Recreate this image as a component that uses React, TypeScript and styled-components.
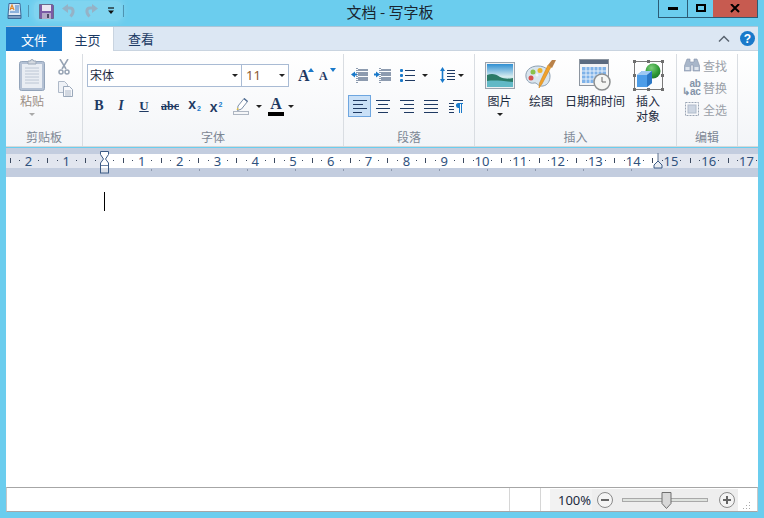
import React from "react";
import styled, { createGlobalStyle } from "styled-components";

const Global = createGlobalStyle`
  html, body { margin: 0; padding: 0; background: #6bcdee; }
  * { box-sizing: border-box; }
  body { font-family: "Noto Sans CJK SC", "Noto Sans", sans-serif; }
`;

const Window = styled.div`
  width: 764px; height: 518px; background: #6bcdee; display: flex; flex-direction: column;
  padding: 0 6px 6px; overflow: hidden; font-size: 12px; color: #1d2b3f;
`;
const TitleBar = styled.div`height: 26px; display: flex; align-items: flex-start; flex: none;`;
const Quick = styled.div`width: 118px; height: 24px; display: flex; align-items: center; margin-top: -1px; flex: none;`;
const AppIconSlot = styled.div`width: 16px; flex: none; display: flex; justify-content: center;`;
const QuickSep = styled.div`width: 1px; height: 12px; background: #4f93b0; margin: 0 5px 0 6px; flex: none;`;
const QuickGlow = styled.div`
  display: flex; align-items: center; height: 20px; width: 88px; flex: none; margin-right: -5px;
  background: rgba(255,255,255,.14); box-shadow: 0 0 6px 2px rgba(255,255,255,.14); border-radius: 6px;
`;
const QuickBtn = styled.div<{ $w: number }>`width: ${p => p.$w}px; flex: none; display: flex; justify-content: center; align-items: center;`;
const Title = styled.div`flex: 1; text-align: center; font-size: 15px; line-height: 24px; color: #1a2530; padding-right: 2px;`;
const WinButtons = styled.div`display: flex; height: 18px; border: 1px solid #2b5c76; border-top: 0; flex: none;`;
const WinBtn = styled.div<{ $w: number; $close?: boolean }>`
  width: ${p => p.$w}px; display: flex; align-items: center; justify-content: center;
  background: ${p => (p.$close ? "#c75b50" : "transparent")};
  border-left: ${p => (p.$close ? "0" : "1px solid #2b5c76")};
  &:first-child { border-left: 0; }
`;

const Tabs = styled.div`height: 25px; background: #dce7f3; display: flex; align-items: stretch; border-top: 1px solid #a9c6d9; border-bottom: 1px solid #c9d4e0; flex: none;`;
const FileTab = styled.div`width: 56px; background: #1979ca; color: #fff; font-size: 13px; line-height: 21px; display: flex; align-items: center; justify-content: center; margin-bottom: -1px;`;
const Tab = styled.div<{ $active?: boolean }>`
  width: ${p => (p.$active ? 52 : 54)}px; display: flex; align-items: center; justify-content: center; font-size: 13px; line-height: 21px; color: #1b3a63;
  background: ${p => (p.$active ? "#fff" : "transparent")};
  border-right: ${p => (p.$active ? "1px solid #c9d4e0" : "0")};
  margin-bottom: ${p => (p.$active ? "-1px" : "0")};
`;
const TabSpacer = styled.div`flex: 1;`;
const TabTools = styled.div`display: flex; align-items: center; gap: 10px; padding-right: 3px;`;

const Ribbon = styled.div`
  height: 96px; display: flex; background: linear-gradient(#ffffff, #f3f5f8); border-bottom: 1px solid #d8d8d8; padding-top: 3px; flex: none;
`;
const Group = styled.div<{ $w: number }>`
  width: ${p => p.$w}px; height: 92px; display: flex; flex-direction: column; border-right: 1px solid #d9dde2; flex: none;
`;
const GroupBody = styled.div`flex: 1; display: flex; min-height: 0;`;
const GroupLabel = styled.div`height: 18px; text-align: center; color: #7d8794; font-size: 12px; line-height: 18px;`;

const BigButton = styled.div<{ $w: number; $dim?: boolean }>`
  width: ${p => p.$w}px; flex: none; display: flex; flex-direction: column; align-items: center; padding-top: 5px;
  color: ${p => (p.$dim ? "#9b8f86" : "#1d2b3f")};
`;
const BigIcon = styled.div`height: 32px; display: flex; align-items: center; justify-content: center;`;
const BigText = styled.div`font-size: 12px; line-height: 18px; margin-top: 1px; text-align: center; white-space: nowrap;`;
const BigLine = styled.div`font-size: 12px; line-height: 18px; height: 15px; text-align: center; white-space: nowrap;`;
const BigLines = styled.div`margin-top: 1px; display: flex; flex-direction: column;`;
const DropArrow = styled.div<{ $dim?: boolean; $mt?: number }>`
  width: 0; height: 0; border: 3px solid transparent; border-bottom: 0; border-top: 3px solid ${p => (p.$dim ? "#a9a9a9" : "#222")};
  margin-top: ${p => p.$mt ?? 0}px;
`;
const Stack = styled.div<{ $pt: number }>`display: flex; flex-direction: column; padding-top: ${p => p.$pt}px;`;
const Row = styled.div<{ $h?: number; $mt?: number; $ml?: number }>`
  display: flex; align-items: center; height: ${p => (p.$h ? `${p.$h}px` : "auto")};
  margin-top: ${p => p.$mt ?? 0}px; margin-left: ${p => p.$ml ?? 0}px;
`;
const Cell = styled.div<{ $w: number }>`width: ${p => p.$w}px; flex: none; display: flex; justify-content: center; align-items: center; color: #1f3a63;`;
const FontBox = styled.div<{ $w: number }>`
  width: ${p => p.$w}px; height: 23px; border: 1px solid #a9bbd4; background: #fff; display: flex; align-items: center; justify-content: space-between;
  padding: 0 3px 1px 2px; font-size: 12px; line-height: 18px; color: #1d2b3f; flex: none;
  & + & { border-left: 0; }
`;
const SizeText = styled.span`font-family: "Noto Sans", sans-serif; font-size: 13px; color: #8a5a30; padding-left: 2px;`;
const Serif = styled.span<{ $i?: boolean; $size?: number; $strike?: boolean }>`
  font-family: "Liberation Serif", serif; font-weight: 700; font-size: ${p => p.$size ?? 14}px; line-height: 16px;
  font-style: ${p => (p.$i ? "italic" : "normal")}; text-decoration: ${p => (p.$strike ? "line-through" : "none")}; color: #1f3a63;
`;
const Under = styled(Serif)`text-decoration: underline;`;
const Script = styled.span`font-family: "Liberation Sans", sans-serif; font-weight: 700; font-size: 14px; line-height: 16px; color: #1f3a63;`;
const Sub = styled.span`font-size: 7px; color: #1979ca; vertical-align: -2px; margin-left: 1px;`;
const Sup = styled.span`font-size: 7px; color: #1979ca; vertical-align: 5px; margin-left: 1px;`;
const ColorA = styled.div`display: flex; flex-direction: column; align-items: center; width: 16px;`;
const ColorBar = styled.div`width: 16px; height: 4px; background: #000;`;
const GrowA = styled.div`position: relative; width: 18px; height: 16px; display: flex; align-items: flex-end;`;
const Caretlet = styled.div<{ $down?: boolean }>`
  position: absolute; top: 0; right: ${p => (p.$down ? 1 : 2)}px; width: 0; height: 0; border: 3px solid transparent;
  ${p => (p.$down ? "border-bottom: 0; border-top: 4px solid #1979ca;" : "border-top: 0; border-bottom: 4px solid #1979ca;")}
`;
const SelectedCell = styled(Cell)`height: 22px; background: #c9e0f7; border: 1px solid #6ea6e0;`;

const EditRow = styled.div`height: 22px; display: flex; align-items: center; gap: 3px; color: #9aa0a8; font-size: 12px; padding-left: 6px;`;
const EditIcon = styled.div`width: 17px; display: flex; justify-content: center;`;

const RulerWrap = styled.div`position: relative; flex: none;`;
const Ruler = styled.div`height: 29px; margin-top: 1px; background: #c3cddf; padding-top: 6px; overflow: hidden;`;
const RulerBand = styled.div`
  height: 14px;
  background: linear-gradient(to right, #e2e6ef 98px, #fff 98px, #fff 652px, #e2e6ef 652px);
`;
const RulerTrack = styled.div`display: flex; margin-left: -15.4px;`;
const RulerUnit = styled.div`position: relative; flex: none; width: 37.8px; height: 14px;`;
const RulerNum = styled.span`
  position: absolute; left: -10px; width: 20px; text-align: center; top: -2px; font-family: "Noto Sans", sans-serif; font-size: 13px; line-height: 18px; color: #30527e;
`;
const RulerTick = styled.i<{ $at: number; $long?: boolean }>`
  position: absolute; left: ${p => p.$at}%; top: ${p => (p.$long ? 4 : 6)}px; width: 1px; height: ${p => (p.$long ? 5 : 1)}px; background: #3c4a60;
`;
const TabStops = styled.div`
  height: 9px; width: 530px; margin-left: 98px;
  background: repeating-linear-gradient(to right, transparent 0, transparent 47px, #8f9aae 47px, #8f9aae 48px) no-repeat 0 1px / 100% 2px;
`;
const IndentMarker = styled.svg<{ $x: number; $y: number }>`position: absolute; left: ${p => p.$x}px; top: ${p => p.$y}px;`;

const Editor = styled.div`flex: 1; background: #fff; padding: 15px 0 0 98px; min-height: 0;`;
const Caret = styled.div`width: 1px; height: 19px; background: #000;`;

const Status = styled.div`
  height: 25px; background: #fff; border-top: 1px solid #a6a6a6; border-bottom: 1px solid #a6a6a6; display: flex; flex: none;
  border-left: 1px solid #c8c8c8; border-right: 1px solid #c8c8c8;
`;
const StatusCell = styled.div<{ $w: number }>`width: ${p => p.$w}px; border-right: 1px solid #d6d6d6; flex: none;`;
const ZoomArea = styled.div`flex: 1; display: flex; align-items: center; padding-left: 9px;`;
const ZoomValue = styled.div`width: 42px; height: 22px; background: #f2f2f2; font-family: "Noto Sans", sans-serif; font-size: 13px; line-height: 22px; color: #1d2b3f; padding-left: 8px; white-space: nowrap; flex: none;`;
const ZoomControls = styled.div`width: 146px; height: 22px; background: #eeeeee; display: flex; align-items: center; padding-left: 5px; flex: none;`;
const Track = styled.div`position: relative; width: 86px; height: 4px; margin: 0 11px 0 9px; background: #dfe3df; border: 1px solid #a9a9a9; flex: none;`;
const Thumb = styled.svg`position: absolute; left: 38px; top: -7px;`;
const Grip = styled.svg`margin-left: 5px; align-self: flex-end; margin-bottom: 1px;`;

const AppIcon = () => (
  <svg width="15" height="16" viewBox="0 0 15 16">
    <path d="M2 .5h11l1 12H1z" fill="#dfe9f5" stroke="#3f6a99" />
    <path d="M1 12.500h13v3H1z" fill="#7f9cc0" stroke="#3f6a99" />
    <path d="M3 7l2-5 2 5M4 5.500h2" fill="none" stroke="#e4892b" strokeWidth="1.200" />
    <path d="M8 3h4M8 5h4M8 7h4M3 9h9" stroke="#3a7bc4" />
  </svg>
);
const SaveIcon = () => (
  <svg width="15" height="15" viewBox="0 0 15 15">
    <path d="M.5.500h13l1 1v13H.5z" fill="#7b5aa6" stroke="#6a6a8c" />
    <rect x="3" y="1" width="9" height="6" fill="#e9e6f2" />
    <rect x="3" y="9" width="9" height="6" fill="#b3a9c7" />
    <rect x="8" y="10" width="2" height="4" fill="#4f4a66" />
  </svg>
);
const UndoIcon = ({ flip }: { flip?: boolean }) => (
  <svg width="14" height="14" viewBox="0 0 14 14" style={flip ? { transform: "scaleX(-1)" } : undefined}>
    <path d="M3 4h5c3.500 0 4.500 4.500 .5 8.500" fill="none" stroke="#95b2c6" strokeWidth="3" />
    <path d="M6 0v9L0 4.500z" fill="#95b2c6" />
  </svg>
);
const CustomizeIcon = () => (
  <svg width="8" height="8" viewBox="0 0 8 8"><path d="M1 1h6" stroke="#111" strokeWidth="1.200" /><path d="M1 3.500h6L4 7z" fill="#111" /></svg>
);
const ClipboardIcon = () => (
  <svg width="26" height="32" viewBox="0 0 26 32">
    <rect x=".5" y="2.500" width="25" height="29" rx="2" fill="#b4c1d4" stroke="#93a4ba" />
    <rect x="3" y="5" width="20" height="24" fill="#e9edf3" />
    <path d="M6 9h14M6 12h14M6 15h14M6 18h14M6 21h14M6 24h14" stroke="#bcc6d4" />
    <path d="M9 5V2h2.500a1.500 1.500 0 0 1 3 0H17v3z" fill="#d4d9e0" stroke="#9aa7b8" />
  </svg>
);
const CutIcon = () => (
  <svg width="12" height="16" viewBox="0 0 12 16" fill="none" stroke="#96a3b4" strokeWidth="1.500">
    <path d="M2 0l6 10M10 0L4 10" /><circle cx="3" cy="13" r="2" /><circle cx="9" cy="13" r="2" />
  </svg>
);
const CopyIcon = () => (
  <svg width="16" height="16" viewBox="0 0 16 16">
    <path d="M.5.500h6l3 3v8H.5z" fill="#eef1f6" stroke="#aeb9c8" />
    <path d="M5.500 5.500h6l3 3v7h-9z" fill="#f7f8fb" stroke="#9aa8ba" />
    <path d="M7 10h6M7 12h6M7 14h6" stroke="#aeb9c8" />
  </svg>
);
const Highlighter = () => (
  <svg width="17" height="19" viewBox="0 0 17 19">
    <path d="M5 9l6-7.500 3.500 3-6 7.500-4 1.500z" fill="#fff" stroke="#7b8ea8" />
    <path d="M11 1.500l3.500 3" stroke="#4e6c92" strokeWidth="1.500" />
    <path d="M4.500 10.500l-1 2.500 2.500-.500z" fill="#e8c33c" />
    <rect x=".5" y="14.500" width="15" height="3" fill="#f5f6f8" stroke="#aeb6c2" />
  </svg>
);
const Lines = ({ rows, w = 14 }: { rows: [number, number][]; w?: number }) => (
  <svg width={w} height="13" viewBox={`0 0 ${w} 13`}>
    {rows.map(([x, len], i) => (
      <rect key={i} x={x} y={i * (12 / Math.max(rows.length - 1, 1))} width={len} height="1" fill="#1f3a63" />
    ))}
  </svg>
);
const IndentIcon = ({ rev }: { rev?: boolean }) => (
  <svg width="17" height="15" viewBox="0 0 17 15">
    <path d="M7 2h10M7 5h10M7 7h10M7 10h10M7 12h10" stroke="#1f3a63" />
    <path d="M6 0v15" stroke="#1f3a63" strokeDasharray="1 1" />
    {rev ? <path d="M0 6.500l4-3v2h2v2H4v2z" fill="#1979ca" /> : <path d="M6 6.500l-4-3v2H0v2h2v2z" fill="#1979ca" />}
  </svg>
);
const BulletsIcon = () => (
  <svg width="15" height="13" viewBox="0 0 15 13">
    <path d="M5 1.500h10M5 6.500h10M5 11.500h10" stroke="#1f3a63" />
    <rect y="0" width="3" height="3" rx="1" fill="#1979ca" /><rect y="5" width="3" height="3" rx="1" fill="#1979ca" /><rect y="10" width="3" height="3" rx="1" fill="#1979ca" />
  </svg>
);
const SpacingIcon = () => (
  <svg width="15" height="16" viewBox="0 0 15 16">
    <path d="M7 3.500h8M7 6.500h8M7 9.500h8M7 12.500h8" stroke="#1f3a63" />
    <path d="M2.500 0L5 4H3.300v8H5l-2.500 4L0 12h1.700V4H0z" fill="#1979ca" />
  </svg>
);
const RtlIcon = () => (
  <svg width="14" height="13" viewBox="0 0 14 13">
    <path d="M4 .5h10M0 3.500h5M0 6.500h5M0 9.500h5M0 12.500h5" stroke="#1f3a63" />
    <path d="M9 3h5v1h-1v9h-1V4h-1v9h-1V8a2.500 2.500 0 0 1-1-5z" fill="#1979ca" />
  </svg>
);
const PictureIcon = () => (
  <svg width="30" height="27" viewBox="0 0 30 27">
    <rect x=".5" y=".5" width="29" height="26" fill="#eef0f2" stroke="#9aa3ad" />
    <defs><linearGradient id="sky" x1="0" y1="0" x2="0" y2="1"><stop offset="0" stopColor="#2f8fd2" /><stop offset=".55" stopColor="#d6ecef" /><stop offset="1" stopColor="#5cb2b8" /></linearGradient></defs>
    <rect x="2" y="2" width="26" height="23" fill="url(#sky)" />
    <path d="M2 13c5-2 9-1 13 2 4 2 9 2 13 1v4H2z" fill="#2a7a66" />
    <path d="M2 19c8-1 16 0 26 1v5H2z" fill="#62b9c6" />
  </svg>
);
const PaletteIcon = () => (
  <svg width="32" height="32" viewBox="0 0 32 32">
    <path d="M13 7C5 7 0 12 1 18c.5 4 4 7 8 6 3-1 4 4 9 3 5-1 7-5 7-10S21 7 13 7z" fill="#d9e5ee" stroke="#8ca0b2" />
    <circle cx="8" cy="13" r="2.500" fill="#8ac24a" /><circle cx="15" cy="11.500" r="2.500" fill="#edb52c" /><circle cx="6" cy="19" r="2.500" fill="#d8504d" /><circle cx="12" cy="16" r="1.500" fill="#f2f6f9" />
    <path d="M26 8L17 25l-3 4 .5-5L23 6z" fill="#f0a12b" stroke="#c67c15" strokeWidth=".5" />
    <path d="M23 6l4-5 4 0-4 8z" fill="#b9824a" />
  </svg>
);
const CalendarIcon = () => (
  <svg width="32" height="32" viewBox="0 0 32 32">
    <rect x=".5" y=".5" width="29" height="26" fill="#f2f3f5" stroke="#8c95a0" />
    <rect x="1" y="1" width="28" height="4" fill="#5a6a80" />
    <rect x="3" y="8" width="24" height="16" fill="#7fb2e8" />
    <path d="M3 12h24M3 16h24M3 20h24M7 8v16M11 8v16M15 8v16M19 8v16M23 8v16" stroke="#e7f0fa" />
    <circle cx="23" cy="23" r="8" fill="#f5f6f4" stroke="#8c8f90" strokeWidth="1.500" />
    <path d="M23 18v5h4" fill="none" stroke="#666" />
  </svg>
);
const ObjectIcon = () => (
  <svg width="31" height="31" viewBox="0 0 31 31">
    <defs><radialGradient id="ball" cx=".4" cy=".3" r=".8"><stop offset="0" stopColor="#7fd07c" /><stop offset=".6" stopColor="#2f9a35" /><stop offset="1" stopColor="#1f6f28" /></radialGradient></defs>
    <rect x="1.500" y="1.500" width="28" height="28" fill="none" stroke="#7a7a7a" />
    <path d="M0 0h3v3H0zM14 0h3v3h-3zM28 0h3v3h-3zM0 14h3v3H0zM28 14h3v3h-3zM0 28h3v3H0zM14 28h3v3h-3zM28 28h3v3h-3z" fill="#6e6e6e" />
    <circle cx="20" cy="11" r="7.500" fill="url(#ball)" />
    <path d="M4 15l5-4h10v12l-5 4H4z" fill="#4d9de8" />
    <path d="M4 15h10l5-4H9z" fill="#9ec9f3" /><path d="M14 15v12l5-4V11z" fill="#2b76c4" />
  </svg>
);
const BinocularIcon = () => (
  <svg width="16" height="14" viewBox="0 0 16 14">
    <path d="M3 1h3v3h4V1h3l3 8v4H9V7H7v6H0V9z" fill="#a8b6c9" stroke="#8896ab" strokeWidth=".6" />
    <rect x="1.500" y="9" width="4" height="3" fill="#dfe5ed" /><rect x="10.500" y="9" width="4" height="3" fill="#dfe5ed" />
  </svg>
);
const SelectAllIcon = () => (
  <svg width="14" height="14" viewBox="0 0 14 14">
    <rect x=".5" y=".5" width="13" height="13" fill="none" stroke="#9aa5b4" strokeDasharray="2 1" />
    <rect x="3" y="3" width="8" height="8" fill="#ccd5e2" stroke="#b1bccb" />
  </svg>
);
const ReplaceLine = styled.span`
  font-family: "Liberation Sans", sans-serif; font-weight: 700; font-size: 10px; line-height: 12px; height: 8px; color: #8393a8; display: block; white-space: pre; letter-spacing: -.3px; text-align: right;
`;
const ReplaceStack = styled.div`display: flex; flex-direction: column; margin-top: -3px;`;

const Circle = ({ plus }: { plus?: boolean }) => (
  <svg width="16" height="16" viewBox="0 0 16 16">
    <circle cx="8" cy="8" r="7.500" fill="#f4f4f4" stroke="#8a8a8a" />
    <path d={plus ? "M4 8h8M8 4v8" : "M4 8h8"} stroke="#666" strokeWidth="2" />
  </svg>
);

const units = Array.from({ length: 21 }, (_, i) => i - 3);

export default function App() {
  return (
    <Window>
      <Global />
      <TitleBar>
        <Quick>
          <AppIconSlot><AppIcon /></AppIconSlot>
          <QuickSep />
          <QuickGlow>
            <QuickBtn $w={24}><SaveIcon /></QuickBtn>
            <QuickBtn $w={22}><UndoIcon /></QuickBtn>
            <QuickBtn $w={22}><UndoIcon flip /></QuickBtn>
            <QuickBtn $w={18}><CustomizeIcon /></QuickBtn>
          </QuickGlow>
          <QuickSep />
        </Quick>
        <Title>文档 - 写字板</Title>
        <WinButtons>
          <WinBtn $w={28}><svg width="11" height="4"><rect width="10" height="3" fill="#000" /></svg></WinBtn>
          <WinBtn $w={26}><svg width="10" height="9"><rect x="1" y="1" width="8" height="6" fill="none" stroke="#000" strokeWidth="2" /></svg></WinBtn>
          <WinBtn $w={44} $close><svg width="10" height="9"><path d="M1 0l8 8M9 0L1 8" stroke="#000" strokeWidth="2" /></svg></WinBtn>
        </WinButtons>
      </TitleBar>

      <Tabs>
        <FileTab>文件</FileTab>
        <Tab $active>主页</Tab>
        <Tab>查看</Tab>
        <TabSpacer />
        <TabTools>
          <svg width="12" height="8" viewBox="0 0 12 8"><path d="M1 6.500L6 1.500l5 5" fill="none" stroke="#5a6470" strokeWidth="1.500" /></svg>
          <svg width="15" height="15" viewBox="0 0 15 15"><circle cx="7.500" cy="7.500" r="7.500" fill="#1979ca" /><text x="7.500" y="12" textAnchor="middle" fontFamily="Liberation Sans" fontWeight="700" fontSize="12" fill="#fff">?</text></svg>
        </TabTools>
      </Tabs>

      <Ribbon>
        <Group $w={77}>
          <GroupBody>
            <BigButton $w={52} $dim>
              <BigIcon><ClipboardIcon /></BigIcon>
              <BigText>粘贴</BigText>
              <DropArrow $dim $mt={3} />
            </BigButton>
            <Stack $pt={5}>
              <Cell $w={12}><CutIcon /></Cell>
              <Row $mt={6}><CopyIcon /></Row>
            </Stack>
          </GroupBody>
          <GroupLabel>剪贴板</GroupLabel>
        </Group>

        <Group $w={261}>
          <GroupBody>
            <Stack $pt={10}>
              <Row $ml={4}>
                <FontBox $w={155}>宋体<DropArrow /></FontBox>
                <FontBox $w={47}><SizeText>11</SizeText><DropArrow /></FontBox>
                <Cell $w={8} />
                <Cell $w={20}>
                  <GrowA><Serif $size={16}>A</Serif><Caretlet /></GrowA>
                </Cell>
                <Cell $w={22}>
                  <GrowA><Serif $size={12}>A</Serif><Caretlet $down /></GrowA>
                </Cell>
              </Row>
              <Row $h={24} $mt={7} $ml={5}>
                <Cell $w={22}><Serif>B</Serif></Cell>
                <Cell $w={22}><Serif $i>I</Serif></Cell>
                <Cell $w={24}><Under $size={13}>U</Under></Cell>
                <Cell $w={28}><Serif $strike $size={12}>abc</Serif></Cell>
                <Cell $w={21}><Script>x<Sub>2</Sub></Script></Cell>
                <Cell $w={22}><Script>x<Sup>2</Sup></Script></Cell>
                <Cell $w={29}><Highlighter /></Cell>
                <Cell $w={6}><DropArrow /></Cell>
                <Cell $w={3} />
                <Cell $w={22}>
                  <ColorA><Serif $size={16}>A</Serif><ColorBar /></ColorA>
                </Cell>
                <Cell $w={8}><DropArrow /></Cell>
              </Row>
            </Stack>
          </GroupBody>
          <GroupLabel>字体</GroupLabel>
        </Group>

        <Group $w={131}>
          <GroupBody>
            <Stack $pt={10}>
              <Row $h={22} $ml={4}>
                <Cell $w={23}><IndentIcon rev /></Cell>
                <Cell $w={23}><IndentIcon /></Cell>
                <Cell $w={27}><BulletsIcon /></Cell>
                <Cell $w={8}><DropArrow /></Cell>
                <Cell $w={7} />
                <Cell $w={22}><SpacingIcon /></Cell>
                <Cell $w={6}><DropArrow /></Cell>
              </Row>
              <Row $h={22} $mt={9} $ml={4}>
                <SelectedCell $w={23}><Lines rows={[[0, 14], [0, 10], [0, 14], [0, 9]]} /></SelectedCell>
                <Cell $w={24}><Lines rows={[[0, 14], [2, 10], [0, 14], [2, 10]]} /></Cell>
                <Cell $w={24}><Lines rows={[[0, 14], [4, 10], [0, 14], [4, 10]]} /></Cell>
                <Cell $w={23}><Lines rows={[[0, 14], [0, 14], [0, 14], [0, 14]]} /></Cell>
                <Cell $w={27}><RtlIcon /></Cell>
              </Row>
            </Stack>
          </GroupBody>
          <GroupLabel>段落</GroupLabel>
        </Group>

        <Group $w={202}>
          <GroupBody>
            <BigButton $w={49}>
              <BigIcon><PictureIcon /></BigIcon>
              <BigText>图片</BigText>
              <DropArrow $mt={3} />
            </BigButton>
            <BigButton $w={34}>
              <BigIcon><PaletteIcon /></BigIcon>
              <BigText>绘图</BigText>
            </BigButton>
            <BigButton $w={74}>
              <BigIcon><CalendarIcon /></BigIcon>
              <BigText>日期和时间</BigText>
            </BigButton>
            <BigButton $w={32}>
              <BigIcon><ObjectIcon /></BigIcon>
              <BigLines><BigLine>插入</BigLine><BigLine>对象</BigLine></BigLines>
            </BigButton>
          </GroupBody>
          <GroupLabel>插入</GroupLabel>
        </Group>

        <Group $w={61}>
          <GroupBody>
            <Stack $pt={0}>
              <EditRow><EditIcon><BinocularIcon /></EditIcon>查找</EditRow>
              <EditRow>
                <EditIcon><ReplaceStack><ReplaceLine>ab</ReplaceLine><ReplaceLine>↳ac</ReplaceLine></ReplaceStack></EditIcon>替换
              </EditRow>
              <EditRow><EditIcon><SelectAllIcon /></EditIcon>全选</EditRow>
            </Stack>
          </GroupBody>
          <GroupLabel>编辑</GroupLabel>
        </Group>
      </Ribbon>

      <RulerWrap>
        <Ruler>
          <RulerBand>
            <RulerTrack>
              {units.map(n => (
                <RulerUnit key={n}>
                  {n !== 0 && n !== -3 && <RulerNum>{Math.abs(n)}</RulerNum>}
                  <RulerTick $at={25} />
                  <RulerTick $at={50} $long />
                  <RulerTick $at={75} />
                </RulerUnit>
              ))}
            </RulerTrack>
          </RulerBand>
          <TabStops />
        </Ruler>
        <IndentMarker $x={94} $y={4} width="10" height="23" viewBox="0 0 10 23">
          <path d="M.5.500h8v3L5.500 8 8.500 12v3h-8v-3l3-4-3-4.500z" fill="#fff" stroke="#3c5b85" />
          <rect x=".5" y="15" width="8" height="7" fill="#d8dde6" stroke="#3c5b85" />
          <rect x="1" y="15" width="7" height="2" fill="#fff" />
        </IndentMarker>
        <IndentMarker $x={647} $y={6} width="10" height="16" viewBox="0 0 10 16">
          <path d="M5 8L9 12v3H1v-3z" fill="#e9edf3" stroke="#3c5b85" />
          <path d="M5 0v8" stroke="#5f7390" />
        </IndentMarker>
      </RulerWrap>

      <Editor><Caret /></Editor>

      <Status>
        <StatusCell $w={503} />
        <StatusCell $w={31} />
        <ZoomArea>
          <ZoomValue>100%</ZoomValue>
          <ZoomControls>
            <Circle />
            <Track>
              <Thumb width="11" height="17" viewBox="0 0 11 17"><path d="M1 .5h9v11l-4.500 5-4.500-5z" fill="#d8d8d8" stroke="#6f6f6f" /></Thumb>
            </Track>
            <Circle plus />
          </ZoomControls>
          <Grip width="8" height="8" viewBox="0 0 8 8"><path d="M6 0h1v1H6zM3 3h1v1H3zM6 3h1v1H6zM0 6h1v1H0zM3 6h1v1H3zM6 6h1v1H6z" fill="#aaa" /></Grip>
        </ZoomArea>
      </Status>
    </Window>
  );
}
